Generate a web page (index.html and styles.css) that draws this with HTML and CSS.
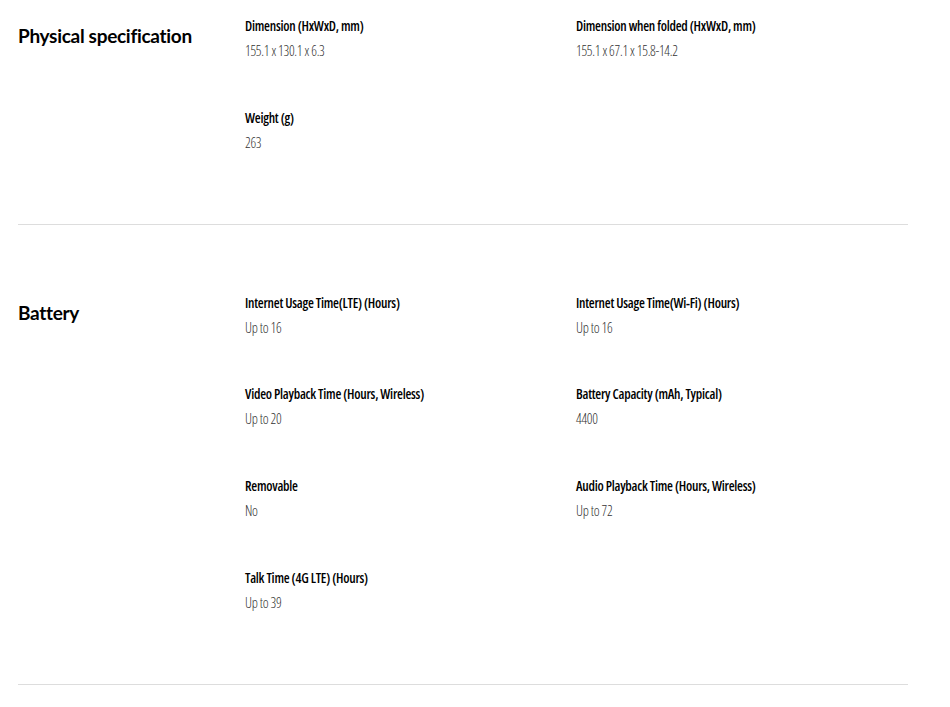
FILE: index.html
```html
<!DOCTYPE html>
<html lang="en">
<head>
<meta charset="utf-8">
<title>Specs</title>
<link rel="stylesheet" href="styles.css">
</head>
<body>
<div class="specs">
  <section class="spec-section first">
    <h2 class="spec-title">Physical specification</h2>
    <div class="spec-grid">
      <div class="spec-item"><div class="spec-label">Dimension (HxWxD, mm)</div><div class="spec-value">155.1 x 130.1 x 6.3</div></div>
      <div class="spec-item"><div class="spec-label">Dimension when folded (HxWxD, mm)</div><div class="spec-value">155.1 x 67.1 x 15.8-14.2</div></div>
      <div class="spec-item"><div class="spec-label">Weight (g)</div><div class="spec-value">263</div></div>
    </div>
  </section>
  <section class="spec-section">
    <h2 class="spec-title">Battery</h2>
    <div class="spec-grid">
      <div class="spec-item"><div class="spec-label">Internet Usage Time(LTE) (Hours)</div><div class="spec-value">Up to 16</div></div>
      <div class="spec-item"><div class="spec-label">Internet Usage Time(Wi-Fi) (Hours)</div><div class="spec-value">Up to 16</div></div>
      <div class="spec-item"><div class="spec-label">Video Playback Time (Hours, Wireless)</div><div class="spec-value">Up to 20</div></div>
      <div class="spec-item"><div class="spec-label">Battery Capacity (mAh, Typical)</div><div class="spec-value">4400</div></div>
      <div class="spec-item"><div class="spec-label">Removable</div><div class="spec-value">No</div></div>
      <div class="spec-item"><div class="spec-label">Audio Playback Time (Hours, Wireless)</div><div class="spec-value">Up to 72</div></div>
      <div class="spec-item"><div class="spec-label">Talk Time (4G LTE) (Hours)</div><div class="spec-value">Up to 39</div></div>
    </div>
  </section>
</div>
</body>
</html>
```

FILE: styles.css
```css
html, body {
  margin: 0;
  padding: 0;
  background: #fff;
}
.specs {
  margin: 0 42px 0 18px;
}
.spec-section {
  display: flex;
  padding: 66px 0 68px;
  border-bottom: 1px solid #ddd;
}
.spec-section.first {
  padding-top: 14px;
}
.spec-title {
  width: 227px;
  flex: none;
  margin: 7px 0 0;
  font-family: Lato, "Open Sans", sans-serif;
  font-weight: 700;
  font-size: 19px;
  line-height: 30px;
  color: #000;
  letter-spacing: -0.3px;
}
.spec-grid {
  flex: 1;
  display: grid;
  grid-template-columns: 331px 1fr;
  row-gap: 41.7px;
}
.spec-item {
  display: flex;
  flex-direction: column;
}
.spec-label {
  font-family: "Open Sans", sans-serif;
  font-stretch: 75%;
  font-weight: 600;
  font-size: 13.5px;
  line-height: 24px;
  letter-spacing: -0.25px;
  color: #000;
}
.spec-value {
  font-family: "Open Sans", sans-serif;
  font-stretch: 75%;
  font-weight: 350;
  font-size: 14px;
  line-height: 26px;
  letter-spacing: -0.3px;
  color: #333;
}
```
